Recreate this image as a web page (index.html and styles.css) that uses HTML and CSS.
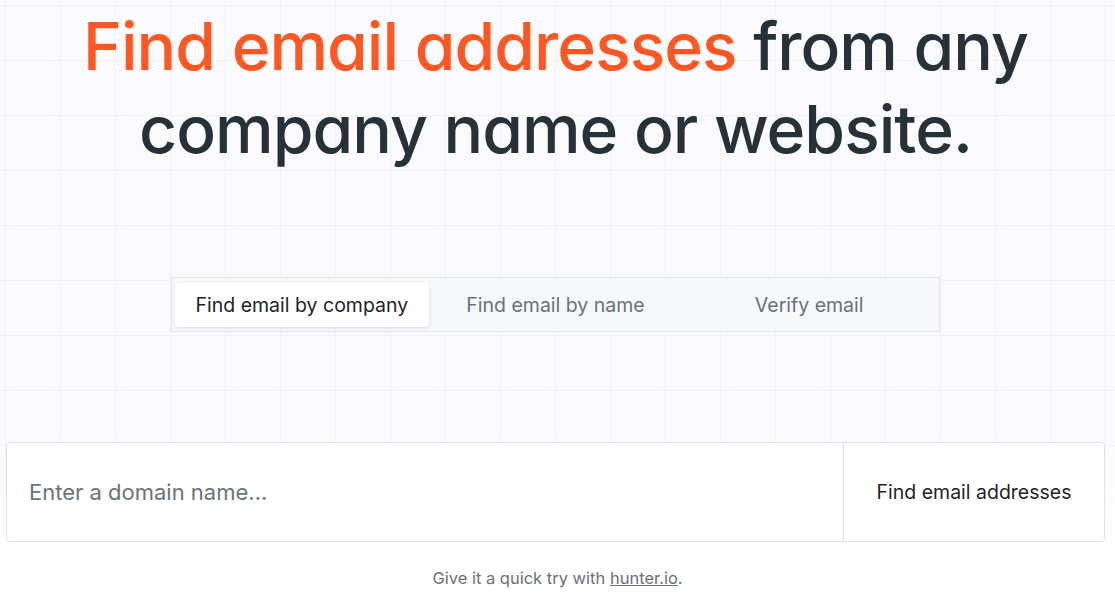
FILE: index.html
```html
<!DOCTYPE html>
<html>
<head>
<title>Hunter - Find email addresses</title>
<meta http-equiv="Content-Type" content="text/html; charset=utf-8" />
<link rel="stylesheet" href="styles.css">
</head>
<body>
<div class="hero">
	<h1 class="title"><span class="accent">Find email addresses</span> from any company name or website.</h1>
	<div class="tabs">
		<div class="tab active">Find email by company</div>
		<div class="tab">Find email by name</div>
		<div class="tab">Verify email</div>
	</div>
	<form class="search" onsubmit="return false;">
		<input class="field" type="text" placeholder="Enter a domain name...">
		<button class="go" type="submit">Find email addresses</button>
	</form>
</div>
<p class="hint">Give it a quick try with <a href="#">hunter.io</a>.</p>
</body>
</html>
```

FILE: styles.css
```css
body {
	margin: 0;
	background: #ffffff;
	font-family: Inter, "Noto Sans", sans-serif;
	color: #263238;
}
.hero {
	padding: 5px 10px 3px 6px;
	background-color: #fbfbfd;
	background-image:
		linear-gradient(to bottom, rgba(255,255,255,0) 0, rgba(255,255,255,0) 430px, #ffffff 550px),
		linear-gradient(to right, #f0f1f4 1px, transparent 1px),
		linear-gradient(to bottom, #f0f1f4 1px, transparent 1px);
	background-size: 100% 100%, 55px 55px, 55px 55px;
	background-position: 0 0, 5px 0, 0 5px;
}
.title {
	margin: 0 auto;
	width: 960px;
	text-align: center;
	font-size: 66px;
	line-height: 83px;
	font-weight: 500;
	letter-spacing: -1px;
	font-feature-settings: "cv11";
	color: #263238;
}
.accent {
	color: #ff5722;
}
.tabs {
	display: flex;
	width: 761px;
	margin: 106px auto 0;
	padding: 5px 3px 4px;
	background: #f7f8fa;
	border: 1px solid #e1e4e8;
}
.tab {
	flex: 1;
	text-align: center;
	font-size: 19.5px;
	line-height: 44px;
	color: #6b7178;
	border-radius: 3px;
	cursor: pointer;
}
.tab.active {
	background: #ffffff;
	color: #1f2328;
	box-shadow: 0 1px 3px rgba(0,0,0,0.12);
}
.search {
	display: flex;
	box-sizing: border-box;
	margin-top: 110px;
	height: 100px;
	background: #ffffff;
	border: 1px solid #dfe2e6;
	border-radius: 4px;
	overflow: hidden;
}
.field {
	flex: 1;
	border: none;
	outline: none;
	padding: 0 22px;
	font-family: Inter, "Noto Sans", sans-serif;
	font-size: 22px;
	color: #263238;
	background: transparent;
}
.field::placeholder {
	color: #6c737a;
}
.go {
	width: 261px;
	border: none;
	border-left: 1px solid #dfe2e6;
	background: #ffffff;
	font-family: Inter, "Noto Sans", sans-serif;
	font-size: 19.5px;
	color: #1f2328;
	cursor: pointer;
}
.hint {
	margin: 23px 0 0;
	text-align: center;
	font-size: 16.5px;
	color: #6b7178;
}
.hint a {
	color: #6b7178;
}
```
